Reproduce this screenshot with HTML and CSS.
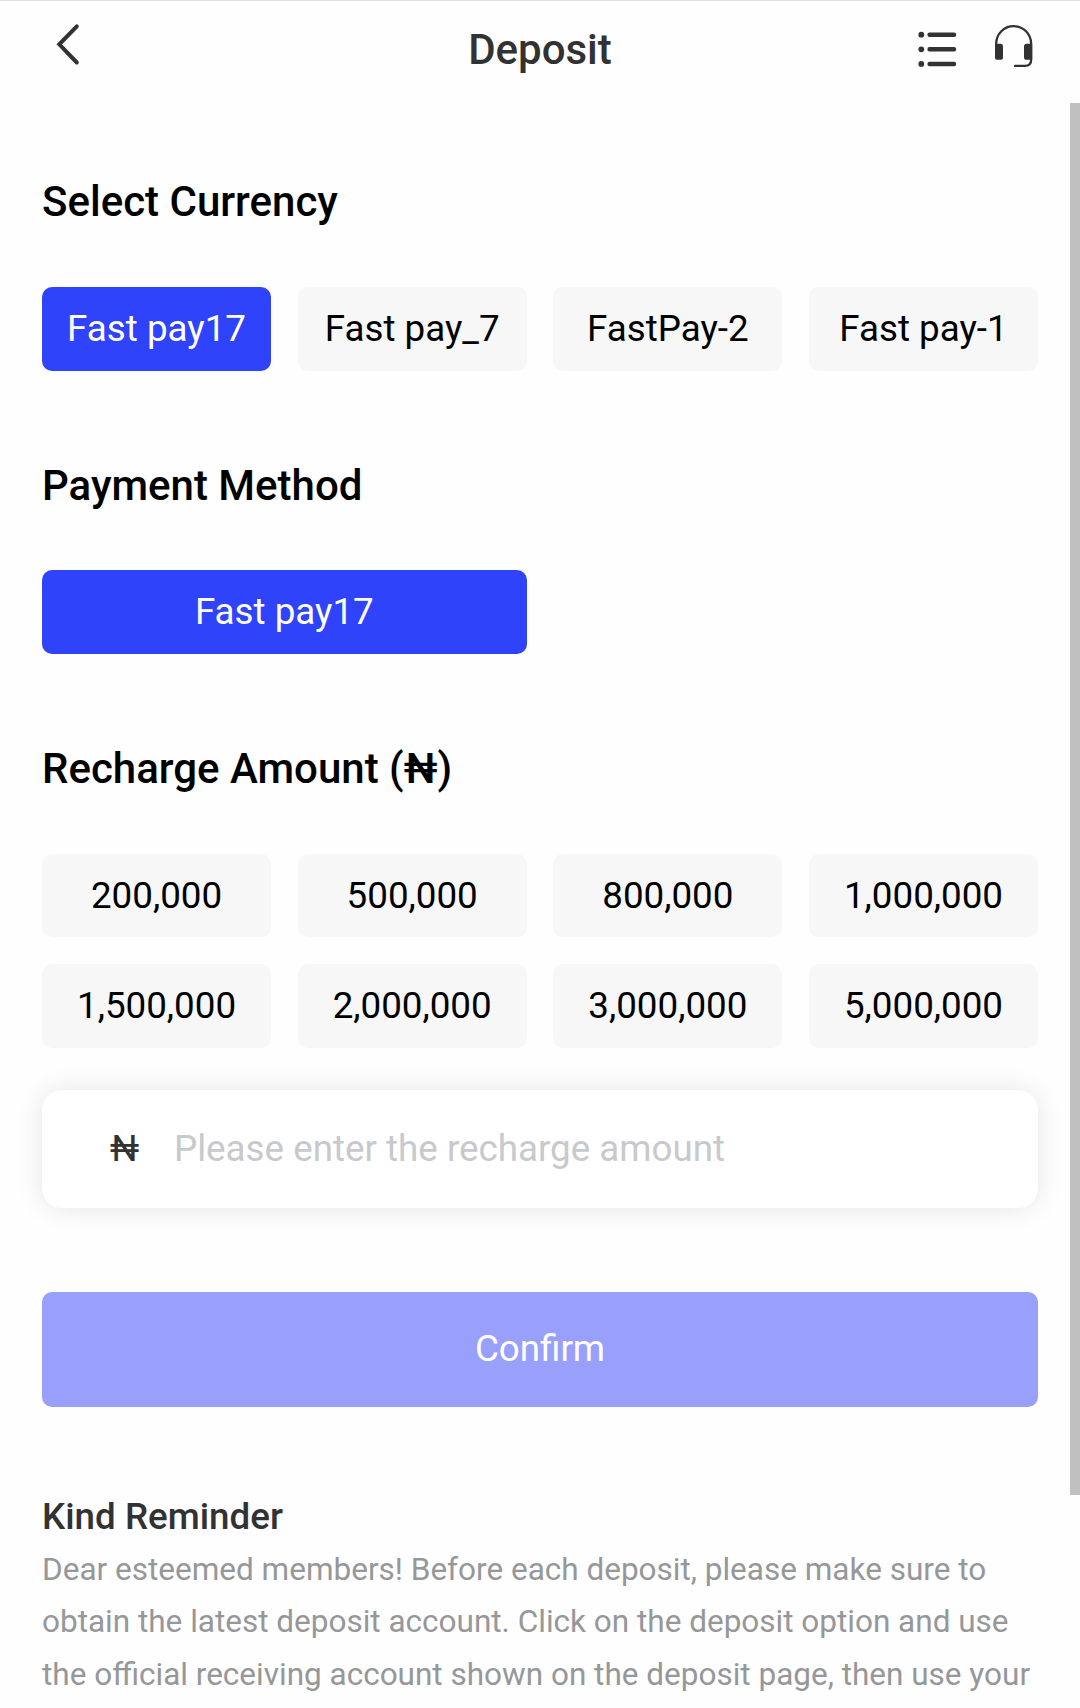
FILE: index.html
```html
<!DOCTYPE html>
<html lang="en">
<head>
<meta charset="utf-8">
<title>Deposit</title>
<link rel="stylesheet" href="styles.css">
</head>
<body>
<div class="page">
  <header class="header">
    <button class="icon-button back" aria-label="Back">
      <svg width="26" height="44" viewBox="0 0 26 44"><path d="M21.8 4.3 4.3 22.3 21.8 40.5" fill="none" stroke="#323233" stroke-width="4" stroke-linecap="round"/></svg>
    </button>
    <h1 class="title">Deposit</h1>
    <div class="actions">
      <button class="icon-button" aria-label="Records">
        <svg width="40" height="38" viewBox="0 0 40 38" fill="#323233"><circle cx="4.3" cy="4.7" r="2.9"/><circle cx="4.3" cy="19.3" r="2.9"/><circle cx="4.3" cy="33.9" r="2.9"/><path d="M12.6 4.7H37M12.6 19.3H37M12.6 33.9H37" stroke="#323233" stroke-width="4.5" stroke-linecap="round"/></svg>
      </button>
      <button class="icon-button headset" aria-label="Support">
        <svg width="38" height="44" viewBox="0 0 38 44"><path d="M1.2 21V18.6C1.2 9 9 1.2 18.7 1.2S36.1 9 36.1 18.6V35C36.1 38.8 33.8 40.9 30 40.9H20" fill="none" stroke="#323233" stroke-width="2.3" stroke-linecap="round"/><rect x="0" y="18.7" width="8" height="16.1" rx="2.6" fill="#323233"/><path d="M31.6 18.7H37.2V34.8H31.6A2.6 2.6 0 0 1 29 32.2V21.3A2.6 2.6 0 0 1 31.6 18.7Z" fill="#323233"/></svg>
      </button>
    </div>
  </header>
  <main class="content">
    <h2 class="heading">Select Currency</h2>
    <div class="options">
      <button class="option active">Fast pay17</button>
      <button class="option">Fast pay_7</button>
      <button class="option">FastPay-2</button>
      <button class="option">Fast pay-1</button>
    </div>
    <h2 class="heading">Payment Method</h2>
    <div class="options">
      <button class="option wide active">Fast pay17</button>
    </div>
    <h2 class="heading">Recharge Amount (₦)</h2>
    <div class="options">
      <button class="option">200,000</button>
      <button class="option">500,000</button>
      <button class="option">800,000</button>
      <button class="option">1,000,000</button>
      <button class="option">1,500,000</button>
      <button class="option">2,000,000</button>
      <button class="option">3,000,000</button>
      <button class="option">5,000,000</button>
    </div>
    <label class="amount">
      <span class="currency">₦</span>
      <input class="amount-input" type="text" placeholder="Please enter the recharge amount">
    </label>
    <button class="confirm">Confirm</button>
    <section class="reminder">
      <h3 class="reminder-title">Kind Reminder</h3>
      <p class="reminder-text">Dear esteemed members! Before each deposit, please make sure to<br>obtain the latest deposit account. Click on the deposit option and use<br>the official receiving account shown on the deposit page, then use your</p>
    </section>
  </main>
  <div class="scrollbar"></div>
</div>
</body>
</html>
```
FILE: styles.css
```css
* {
  box-sizing: border-box;
}

body {
  margin: 0;
  background: #fefefe;
  font-family: Roboto, "Liberation Sans", sans-serif;
}

button {
  padding: 0;
  border: 0;
  font-family: inherit;
}

.page {
  position: relative;
  height: 1708px;
  overflow: hidden;
}

.header {
  display: grid;
  grid-template-columns: 1fr auto 1fr;
  height: 103px;
  padding: 0 47px 0 55px;
  border-top: 1px solid #e0e0e0;
}

.icon-button {
  display: flex;
  background: none;
}

.back {
  justify-self: start;
  align-self: start;
  padding-top: 21px;
}

.title {
  margin: 0;
  padding-top: 19px;
  padding-right: 8px;
  color: #323233;
  font-size: 42px;
  font-weight: 500;
  line-height: 60px;
}

.actions {
  display: flex;
  align-items: flex-start;
  justify-content: flex-end;
  gap: 38px;
  padding-top: 29px;
}

.headset {
  margin-top: -5px;
}

.content {
  padding: 69.2px 42px 0;
}

.heading {
  margin: 0 0 54.8px;
  color: #000;
  font-size: 42px;
  font-weight: 500;
  line-height: 60px;
}

.options {
  display: grid;
  grid-template-columns: repeat(4, 1fr);
  grid-auto-rows: 83.7px;
  gap: 26.6px;
}

.options + .heading {
  margin-top: 84.9px;
}

.option {
  padding-bottom: 1px;
  border-radius: 10px;
  background: #f7f7f7;
  color: #000;
  font-size: 36.75px;
}

.option.wide {
  grid-column: span 2;
}

.option.active {
  background: #2f43fb;
  color: #fff;
}

.amount {
  display: flex;
  align-items: center;
  height: 118px;
  margin-top: 41.9px;
  padding: 0 67px;
  border-radius: 20px;
  background: #fff;
  box-shadow: 0 0 27px rgba(0, 0, 0, 0.1);
}

.currency {
  width: 65px;
  padding-left: 1px;
  color: #323233;
  font-size: 36.75px;
}

.amount-input {
  flex: 1;
  padding: 0;
  border: 0;
  outline: 0;
  background: none;
  color: #323233;
  font-family: inherit;
  font-size: 36.75px;
}

.amount-input::placeholder {
  color: #c8c9cc;
}

.confirm {
  display: block;
  width: 100%;
  height: 114.7px;
  margin-top: 84.3px;
  padding-bottom: 1.5px;
  border-radius: 10px;
  background: #98a0fc;
  color: #fff;
  font-size: 36.75px;
}

.reminder {
  padding-top: 84.2px;
}

.reminder-title {
  margin: 0;
  color: #323233;
  font-size: 36.75px;
  font-weight: 500;
  line-height: 52.5px;
}

.reminder-text {
  margin: 0;
  padding-top: 0.4px;
  color: #969799;
  font-size: 31.5px;
  line-height: 52.5px;
  white-space: nowrap;
}

.scrollbar {
  position: absolute;
  top: 103px;
  right: 0;
  width: 10px;
  height: 1392px;
  background: #c0c0c0;
}
```
